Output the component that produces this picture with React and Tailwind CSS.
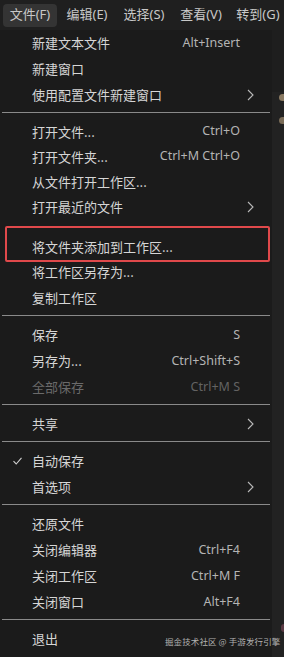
import React from 'react';

const cjk = { fontFamily: '"Noto Sans CJK SC", "Noto Sans", sans-serif' };
const latin = { fontFamily: '"Noto Sans", "Noto Sans CJK SC", sans-serif' };

const Chevron = () => (
    <svg width="7" height="12" viewBox="0 0 7 12" className="ml-[7px]">
        <polyline points="1,1 6,6 1,11" fill="none" stroke="#b8b8b8" strokeWidth="1.1" />
    </svg>
);

const Check = () => (
    <svg width="9" height="8" viewBox="0 0 9 8">
        <polyline points="0.5,4.2 3.2,7 8.5,0.8" fill="none" stroke="#cfcfcf" strokeWidth="1.1" />
    </svg>
);

const Item = ({ label, shortcut, sub, checked, disabled, h = 'h-[26px]' }) => (
    <div className={`flex items-center ${h} text-[13px] ${disabled ? 'text-[#6a6a6a]' : 'text-[#d6d6d6]'}`}>
        <div className="w-[32px] flex justify-center pl-[3px]">{checked && <Check />}</div>
        <div className="flex-1 whitespace-nowrap">{label}</div>
        {shortcut && (
            <div className={`text-[12.5px] whitespace-nowrap ${disabled ? 'text-[#636363]' : 'text-[#b4b4b4]'}`} style={latin}>
                {shortcut}
            </div>
        )}
        <div className="w-[32px] flex items-center">{sub && <Chevron />}</div>
    </div>
);

const Sep = () => <div className="mt-[4px] mb-[6px] mx-[2px] h-px bg-[#8a8a8a]" />;

const App = () => {
    const bar = ['文件(F)', '编辑(E)', '选择(S)', '查看(V)', '转到(G)'];
    return (
        <div className="relative w-[284px] h-[657px] bg-[#1c1c1c] overflow-hidden" style={cjk}>
            <div className="flex items-center gap-[3px] h-[30px] bg-[#1f1f1f] pl-[3px] text-[13px] text-[#c8c8c8]" style={latin}>
                {bar.map((b, i) => (
                    <div key={b} className={`w-[54px] shrink-0 h-[23px] flex items-center justify-center rounded-[4px] whitespace-nowrap ${i === 0 ? 'bg-[#343434]' : ''}`}>{b}</div>
                ))}
            </div>
            <div className="flex">
                <div className="w-[272px] bg-[#1b1b1b]">
                    <Item label="新建文本文件" shortcut="Alt+Insert" />
                    <Item label="新建窗口" />
                    <Item label="使用配置文件新建窗口" sub />
                    <Sep />
                    <Item label="打开文件..." shortcut="Ctrl+O" h="h-[25px]" />
                    <Item label="打开文件夹..." shortcut="Ctrl+M Ctrl+O" h="h-[25px]" />
                    <Item label="从文件打开工作区..." h="h-[25px]" />
                    <Item label="打开最近的文件" sub h="h-[25px]" />
                    <div className="mt-[7px] -mb-[3px] ml-[5px] mr-[2px] h-[36px] border-2 border-[#e0494b] rounded-[2px] pt-[6px]">
                        <div className="-ml-[7px]">
                            <Item label="将文件夹添加到工作区..." h="h-[26px]" />
                        </div>
                    </div>
                    <Item label="将工作区另存为..." />
                    <Item label="复制工作区" />
                    <Sep />
                    <Item label="保存" shortcut="S" />
                    <Item label="另存为..." shortcut="Ctrl+Shift+S" />
                    <Item label="全部保存" shortcut="Ctrl+M S" disabled />
                    <Sep />
                    <Item label="共享" sub />
                    <Sep />
                    <Item label="自动保存" checked />
                    <Item label="首选项" sub />
                    <Sep />
                    <Item label="还原文件" />
                    <Item label="关闭编辑器" shortcut="Ctrl+F4" />
                    <Item label="关闭工作区" shortcut="Ctrl+M F" />
                    <Item label="关闭窗口" shortcut="Alt+F4" />
                    <Sep />
                    <Item label="退出" />
                </div>
                <div className="flex-1 bg-[#222222] h-[627px] flex flex-col items-end">
                    <div className="h-[62px] w-full bg-[#1e1e1e]" />
                    <div className="mt-[2px] w-[5px] h-[7px] rounded-l-full bg-[#8a7a62]" />
                    <div className="mt-[16px] w-[5px] h-[7px] rounded-l-full bg-[#7a6c58]" />
                    <div className="mt-[500px] w-[3px] h-[8px] rounded-l-full bg-[#5a3a44]" />
                </div>
            </div>
            <div className="absolute left-[165px] top-[635px] text-[8.5px] text-[#b0b0b0] whitespace-nowrap tracking-[0.1px]">
                掘金技术社区 @ 手游发行引擎
            </div>
        </div>
    );
};

export default App;
